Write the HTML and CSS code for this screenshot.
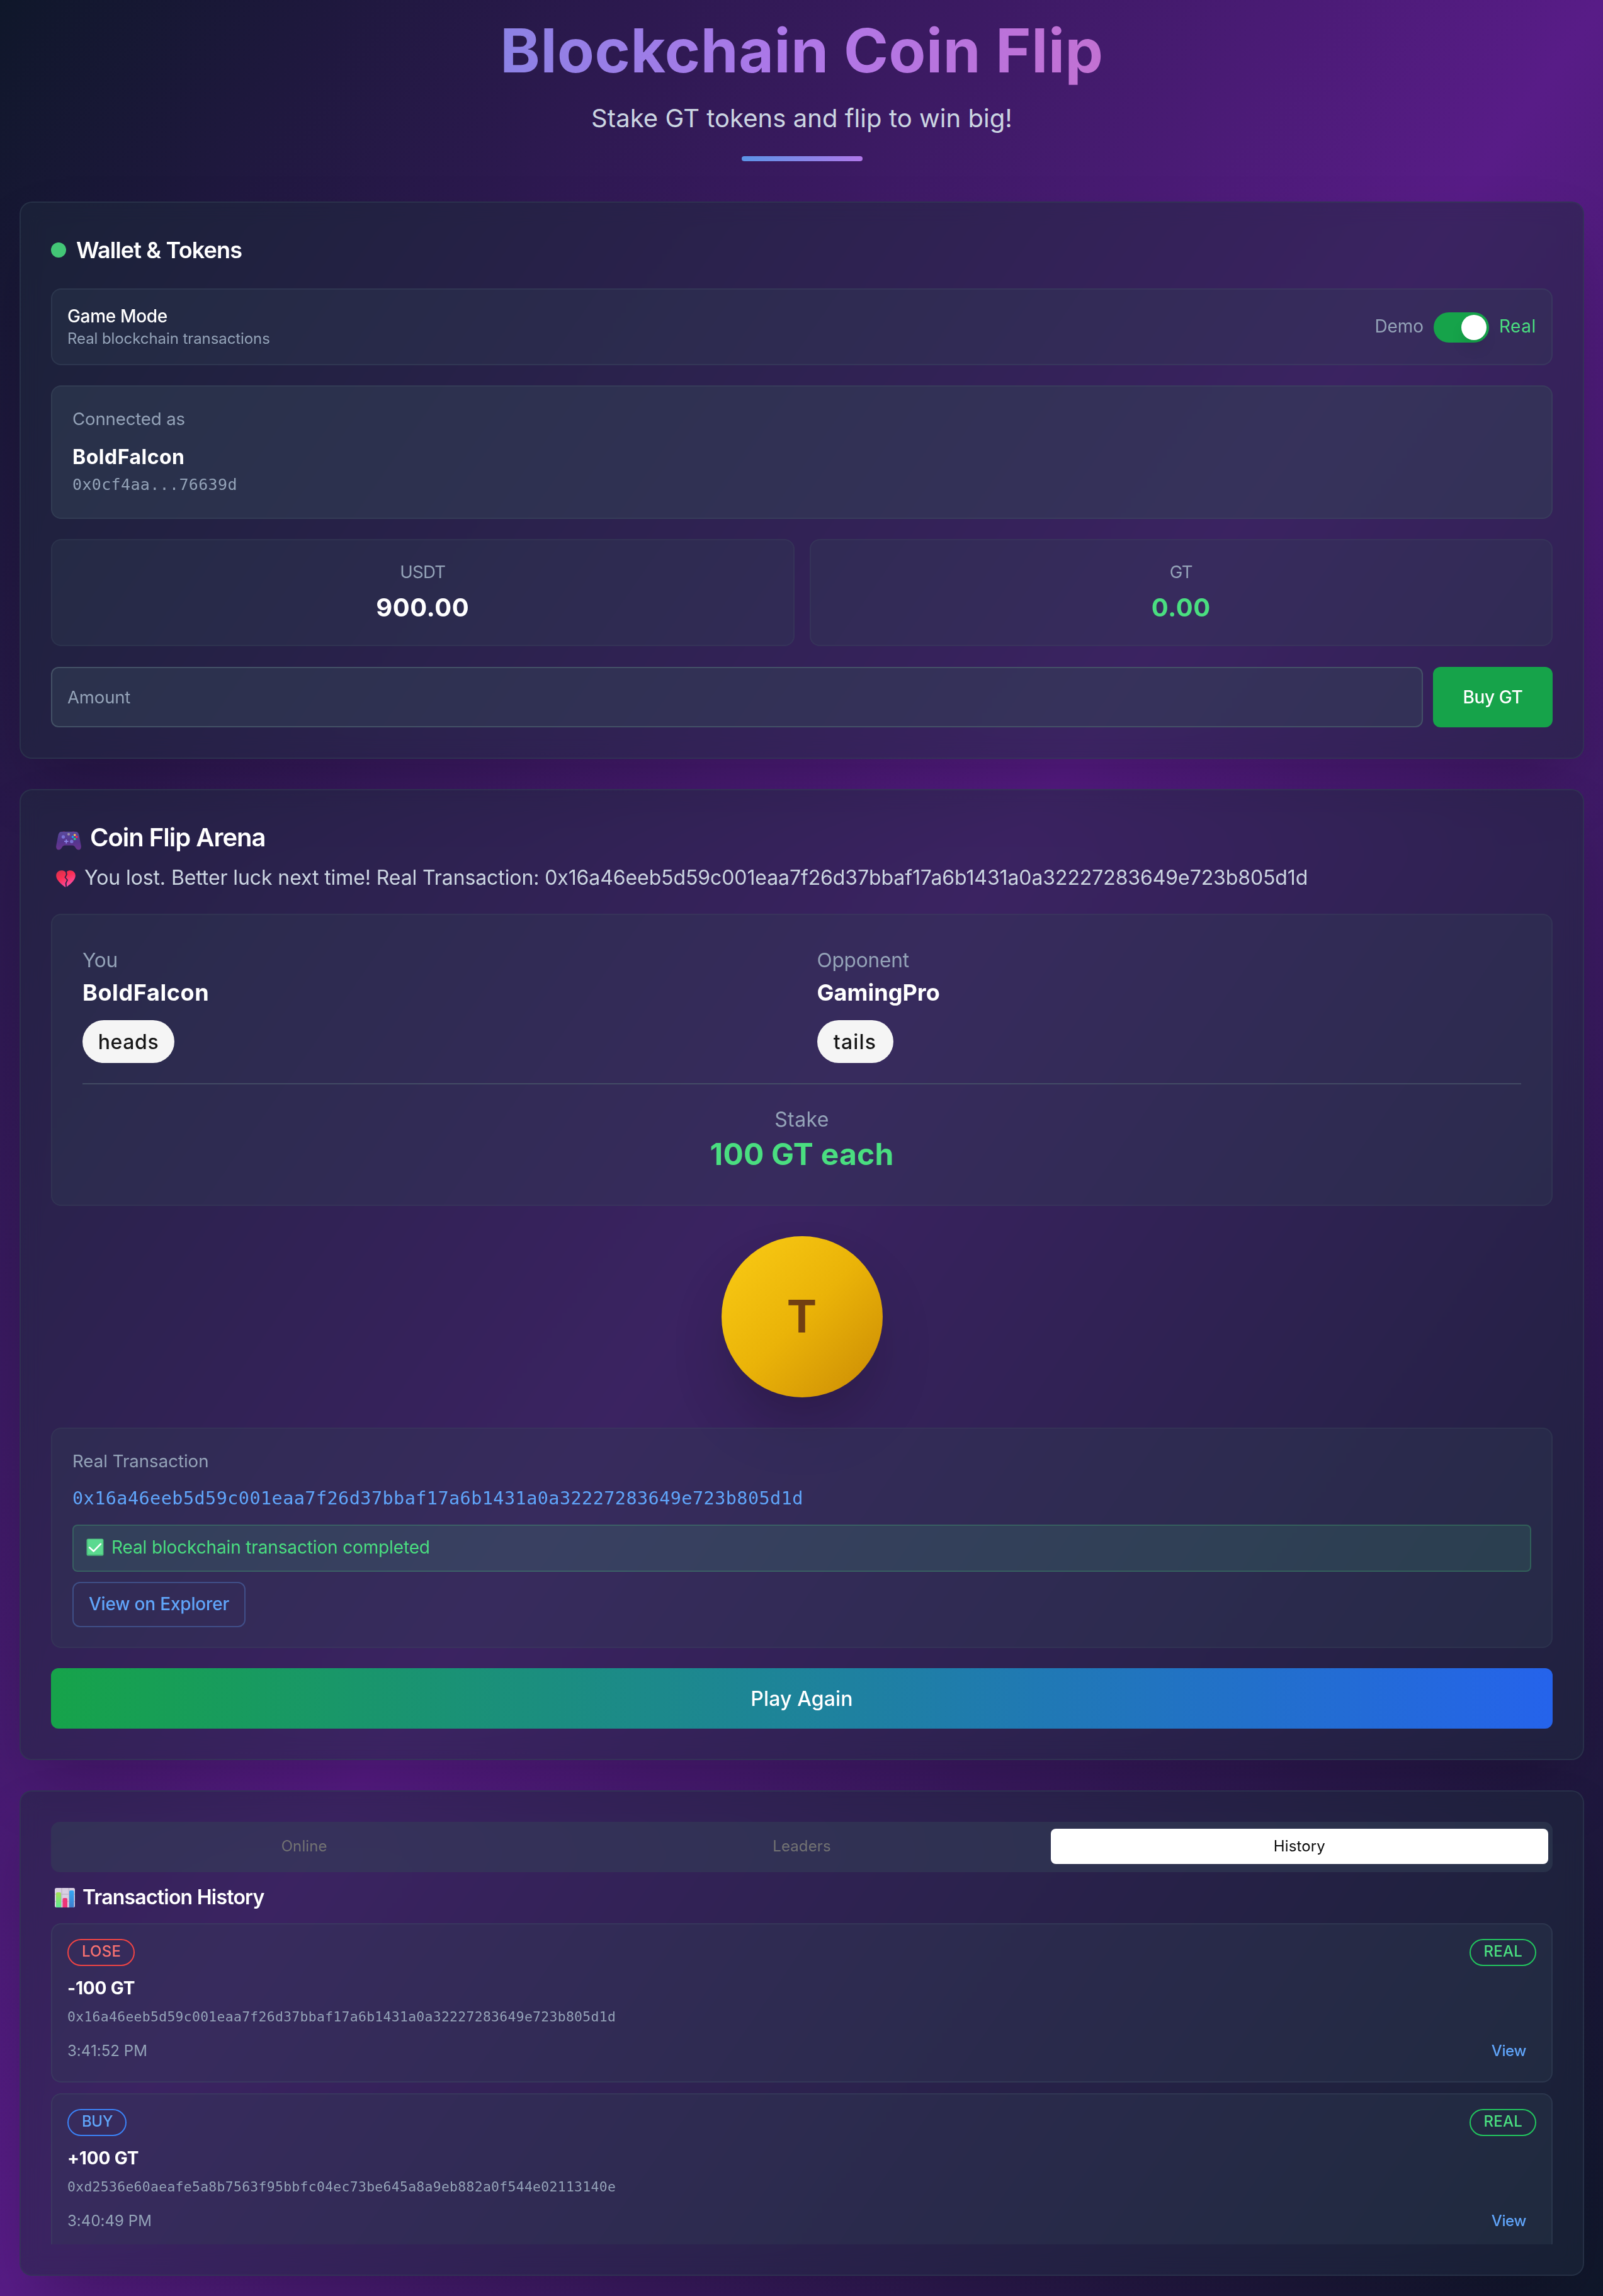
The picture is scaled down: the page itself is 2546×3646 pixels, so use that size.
FILE: index.html
```html
<!DOCTYPE html>
<html lang="en">
<head>
<meta charset="utf-8">
<title>Blockchain Coin Flip</title>
<link rel="stylesheet" href="styles.css">
</head>
<body>
<main class="page">
  <header class="hero">
    <h1 class="hero-title">Blockchain Coin Flip</h1>
    <p class="hero-sub">Stake GT tokens and flip to win big!</p>
    <div class="hero-bar"></div>
  </header>

  <section class="card wallet">
    <div class="card-head">
      <span class="dot"></span>
      <h2 class="wallet-title">Wallet &amp; Tokens</h2>
    </div>
    <div class="mode">
      <div class="mode-text">
        <div class="mode-name">Game Mode</div>
        <div class="mode-desc">Real blockchain transactions</div>
      </div>
      <div class="mode-switch">
        <span class="demo">Demo</span>
        <span class="switch"><span class="thumb"></span></span>
        <span class="real">Real</span>
      </div>
    </div>
    <div class="connected">
      <div class="label label-conn">Connected as</div>
      <div class="conn-name">BoldFalcon</div>
      <div class="conn-addr">0x0cf4aa...76639d</div>
    </div>
    <div class="balances">
      <div class="balance">
        <div class="label label-usdt">USDT</div>
        <div class="amount amount-usdt">900.00</div>
      </div>
      <div class="balance">
        <div class="label label-gt">GT</div>
        <div class="amount amount-gt">0.00</div>
      </div>
    </div>
    <div class="buy">
      <div class="input">Amount</div>
      <button class="buy-btn">Buy GT</button>
    </div>
  </section>

  <section class="card arena">
    <div class="arena-head">
      <svg class="pad" width="40" height="31" viewBox="0 0 40 31">
        <defs>
          <linearGradient id="padg" x1="0" y1="0" x2="0" y2="1"><stop offset="0" stop-color="#5a4a9c"/><stop offset=".55" stop-color="#55358e"/><stop offset="1" stop-color="#6b3590"/></linearGradient>
        </defs>
        <path d="M10 2.6C10.500 .4 14.500 .4 15 2.600ZM25 2.600C25.500 .4 29.500 .4 30 2.600Z" fill="#6e1747"/>
        <path d="M9 1.800H31C34 1.800 35.600 3.500 36.500 7L39.700 23.500C40.500 28 38.500 30.500 36 30.500C33.500 30.500 32 29 30.500 26.500C29 24.200 28 23.500 26 23.500H14C12 23.500 11 24.200 9.500 26.500C8 29 6.500 30.500 4 30.500C1.500 30.500-.5 28 .3 23.500L3.500 7C4.400 3.500 6 1.800 9 1.800Z" fill="url(#padg)"/>
        <circle cx="11.500" cy="10" r="2.700" fill="#7872d4"/>
        <circle cx="24.800" cy="17.200" r="2.700" fill="#7872d4"/>
        <path d="M16.300 14V20.500M13 17.200H19.600" stroke="#8c86ea" stroke-width="1.800"/>
        <circle cx="20" cy="5.700" r="2" fill="#9c92a6"/>
        <circle cx="29.700" cy="7" r="1.800" fill="#fdc751"/>
        <circle cx="32.800" cy="10" r="1.800" fill="#f9284e"/>
        <circle cx="26.500" cy="10" r="1.800" fill="#12a7f5"/>
        <circle cx="29.700" cy="13.200" r="1.800" fill="#22e080"/>
      </svg>
      <h2 class="arena-title">Coin Flip Arena</h2>
    </div>
    <div class="message">
      <svg class="heart" width="31" height="27" viewBox="0 0 31 27">
        <defs>
          <linearGradient id="hg" gradientUnits="userSpaceOnUse" x1="4" y1="0" x2="17" y2="27"><stop offset="0" stop-color="#d8304c"/><stop offset=".45" stop-color="#fb2f54"/><stop offset="1" stop-color="#fb4fa8"/></linearGradient>
        </defs>
        <path d="M15 2.400C13.200 .7 10.800 .2 8.500 .2C4 .2 .2 3.600 .2 8.300C.2 15 6 20.500 14.300 26.500L15.300 26.800L14.600 20.500L17 15.500L13.400 11.300L15.800 7Z" fill="url(#hg)"/>
        <path d="M17 2.200C18.600 .8 20.500 .2 22.500 .2C27 .2 30.800 3.600 30.800 8.300C30.800 15 25 20.500 17 26.200L16.600 20.500L19 15.200L15.400 11.200L17.800 7Z" fill="url(#hg)"/>
      </svg>
      <span>You lost. Better luck next time! Real Transaction: 0x16a46eeb5d59c001eaa7f26d37bbaf17a6b1431a0a32227283649e723b805d1d</span>
    </div>

    <div class="match">
      <div class="players">
        <div class="player">
          <div class="p-label">You</div>
          <div class="p-name">BoldFalcon</div>
          <span class="side side-heads">heads</span>
        </div>
        <div class="player">
          <div class="p-label">Opponent</div>
          <div class="p-name p-name-opp">GamingPro</div>
          <span class="side side-tails">tails</span>
        </div>
      </div>
      <div class="stake">
        <div class="p-label stake-label">Stake</div>
        <div class="stake-value">100 GT each</div>
      </div>
    </div>

    <div class="coin">T</div>

    <div class="tx">
      <div class="label label-tx">Real Transaction</div>
      <div class="tx-hash">0x16a46eeb5d59c001eaa7f26d37bbaf17a6b1431a0a32227283649e723b805d1d</div>
      <div class="tx-ok">
        <svg width="28" height="28" viewBox="0 0 28 28">
          <rect x=".5" y=".5" width="27" height="27" rx="2.500" fill="#4cc07c"/>
          <rect x="2.500" y="1.200" width="23.500" height="24" rx="1.500" fill="#5bd98f"/>
          <path d="M5.200 14.400L11.600 20.300L22.800 8.800" fill="none" stroke="#fff" stroke-width="2.600" stroke-linecap="round" stroke-linejoin="round"/>
        </svg>
        <span>Real blockchain transaction completed</span>
      </div>
      <button class="explorer">View on Explorer</button>
    </div>

    <button class="play">Play Again</button>
  </section>

  <section class="card log">
    <div class="tabs">
      <div class="tab">Online</div>
      <div class="tab">Leaders</div>
      <div class="tab tab-active">History</div>
    </div>
    <div class="log-head">
      <svg width="32" height="31" viewBox="0 0 32 31">
        <defs>
          <linearGradient id="b1" x1="0" y1="0" x2="0" y2="1"><stop offset="0" stop-color="#a6e052"/><stop offset="1" stop-color="#5be894"/></linearGradient>
          <linearGradient id="b3" x1="0" y1="0" x2="0" y2="1"><stop offset="0" stop-color="#33a8f5"/><stop offset="1" stop-color="#3f7dcb"/></linearGradient>
        </defs>
        <rect width="32" height="31" rx="2.500" fill="#d9d0e2"/>
        <path d="M11 0V31M22.500 0V31M0 10H32M0 21.500H32" stroke="#bfb5ca" stroke-width="1.400"/>
        <path d="M2 9Q2 7 4 7H8Q10 7 10 9V31H3Q2 31 2 30Z" fill="url(#b1)"/>
        <path d="M12.500 18Q12.500 16 14.500 16H18Q20 16 20 18V31H12.500Z" fill="#ee3478"/>
        <path d="M23 6Q23 4 25 4H28.500Q30.500 4 30.500 6V29.500Q30.500 31 29 31H23Z" fill="url(#b3)"/>
      </svg>
      <h3 class="log-title">Transaction History</h3>
    </div>
    <div class="rows">
      <article class="row">
        <div class="row-line">
          <span class="badge badge-lose">LOSE</span>
          <span class="badge badge-real">REAL</span>
        </div>
        <div class="row-amount">-100 GT</div>
        <div class="row-hash">0x16a46eeb5d59c001eaa7f26d37bbaf17a6b1431a0a32227283649e723b805d1d</div>
        <div class="row-line row-foot">
          <span class="time">3:41:52 PM</span>
          <a class="view">View</a>
        </div>
      </article>
      <article class="row">
        <div class="row-line">
          <span class="badge badge-buy">BUY</span>
          <span class="badge badge-real">REAL</span>
        </div>
        <div class="row-amount">+100 GT</div>
        <div class="row-hash">0xd2536e60aeafe5a8b7563f95bbfc04ec73be645a8a9eb882a0f544e02113140e</div>
        <div class="row-line row-foot">
          <span class="time">3:40:49 PM</span>
          <a class="view">View</a>
        </div>
      </article>
    </div>
  </section>
</main>
</body>
</html>
```
FILE: styles.css
```css
*, *::before, *::after { box-sizing: border-box; margin: 0; padding: 0; }

body {
  font-family: Inter, "Liberation Sans", sans-serif;
  color: #fff;
  background: #0f172a;
  white-space: nowrap;
}

button { font: inherit; border: 0; background: none; color: inherit; }

.page {
  height: 3646px;
  padding: 32px 30px 32px 31px;
  background: linear-gradient(to bottom right, #0f172a, #581c87, #0f172a);
  overflow: hidden;
}

/* Header */
.hero { display: flex; flex-direction: column; align-items: center; margin-bottom: 64px; }
.hero-title {
  width: 100%;
  text-align: center;
  font-size: 96px;
  line-height: 96px;
  font-weight: 700;
  letter-spacing: .61px;
  background: linear-gradient(to right, #60a5fa, #c084fc, #f472b6);
  background-clip: text;
  -webkit-background-clip: text;
  color: transparent;
  opacity: .88;
  padding-bottom: 10px;
  margin-bottom: -10px;
}
.hero-sub { margin-top: 32px; font-size: 40px; line-height: 56px; letter-spacing: .05px; color: #cbd5e1; }
.hero-bar { margin-top: 32px; width: 192px; height: 8px; border-radius: 4px; background: linear-gradient(to right, #60a5fa, #c084fc); opacity: .88; }

/* Cards */
.card {
  padding: 48px;
  border: 2px solid rgba(51, 65, 85, .5);
  border-radius: 20px;
  background: rgba(30, 41, 59, .5);
  box-shadow: 0 50px 100px -24px rgba(0, 0, 0, .25);
  backdrop-filter: blur(16px);
}
.card + .card { margin-top: 48px; }

.label { font-size: 27.6px; line-height: 40px; letter-spacing: -.15px; color: #94a3b8; }

/* Wallet */
.card-head { display: flex; align-items: center; gap: 16px; height: 54px; }
.dot { width: 24px; height: 24px; border-radius: 50%; background: #4ade80; opacity: .88; }
.wallet-title { font-size: 36px; line-height: 54px; font-weight: 600; letter-spacing: -.85px; }

.mode {
  display: flex; align-items: center; justify-content: space-between;
  margin-top: 34px; height: 122px; padding: 22px 24px 24px;
  border: 2px solid rgba(71, 85, 105, .3); border-radius: 16px;
  background: rgba(51, 65, 85, .3);
}
.mode-name { font-size: 28px; line-height: 40px; font-weight: 500; letter-spacing: -.33px; }
.mode-desc { font-size: 24px; line-height: 32px; letter-spacing: -.08px; color: #94a3b8; }
.mode-switch { display: flex; align-items: center; gap: 16px; font-size: 28px; line-height: 40px; }
.demo { color: #94a3b8; letter-spacing: -.13px; }
.real { color: #4ade80; letter-spacing: .6px; }
.switch { display: flex; align-items: center; justify-content: flex-end; width: 88px; height: 48px; margin-top: 4px; padding: 4px; border-radius: 24px; background: #16a34a; }
.thumb { width: 40px; height: 40px; border-radius: 50%; background: #fff; box-shadow: 0 16px 24px -6px rgba(0, 0, 0, .15); }

.connected {
  margin-top: 32px; height: 212px; padding: 31px 32px;
  border: 2px solid rgba(71, 85, 105, .3); border-radius: 16px;
  background: rgba(51, 65, 85, .5);
}
.conn-name { margin-top: 17px; font-size: 32px; line-height: 48px; font-weight: 700; letter-spacing: .5px; }
.conn-addr { margin-top: 4px; font-family: "DejaVu Sans Mono", monospace; font-size: 25px; line-height: 32px; letter-spacing: .35px; color: #94a3b8; }

.balances { display: grid; grid-template-columns: 1fr 1fr; gap: 24px; margin-top: 32px; }
.balance {
  height: 170px; padding-top: 30px; text-align: center;
  border: 2px solid rgba(71, 85, 105, .2); border-radius: 16px;
  background: rgba(51, 65, 85, .3);
}
.label-usdt, .label-gt { letter-spacing: -.8px; }
.amount { margin-top: 9px; font-size: 40px; line-height: 56px; font-weight: 700; letter-spacing: .5px; }
.amount-gt { color: #4ade80; }

.buy { display: flex; gap: 16px; margin-top: 33px; height: 96px; }
.input {
  flex: 1; padding-left: 24px; font-size: 27.6px; line-height: 93px; letter-spacing: -.2px; color: #94a3b8;
  border: 2px solid rgba(71, 85, 105, .9); border-radius: 12px;
  background: rgba(51, 65, 85, .5);
}
.buy-btn { width: 190px; border-radius: 12px; background: #16a34a; font-size: 28px; font-weight: 500; letter-spacing: -.35px; }

/* Arena */
.arena-head { display: flex; align-items: center; height: 54px; padding-left: 8px; gap: 14px; }
.pad { margin-top: 9px; }
.arena-title { font-size: 40px; line-height: 54px; font-weight: 600; letter-spacing: -1px; }
.message { display: flex; align-items: center; gap: 14px; margin-top: 13px; height: 48px; padding-left: 8px; font-size: 32px; line-height: 48px; letter-spacing: -.1px; color: #cbd5e1; }
.heart { margin-top: 2px; }

.match {
  margin-top: 33px; height: 464px; padding: 48px;
  border: 2px solid rgba(71, 85, 105, .2); border-radius: 16px;
  background: rgba(51, 65, 85, .3);
}
.players { display: grid; grid-template-columns: 1fr 1fr; gap: 48px; }
.player { display: flex; flex-direction: column; align-items: flex-start; }
.p-label { font-size: 31.6px; line-height: 48px; letter-spacing: -.2px; color: #94a3b8; }
.p-name { font-size: 36px; line-height: 54px; font-weight: 700; letter-spacing: .6px; }
.p-name-opp { letter-spacing: .05px; }
.side { display: flex; align-items: center; justify-content: center; height: 68px; margin-top: 17px; border-radius: 34px; background: #f5f5f5; color: #171717; font-size: 32px; font-weight: 500; }
.side-heads { width: 146px; letter-spacing: .6px; }
.side-tails { width: 121px; letter-spacing: 1.2px; }
.stake { margin-top: 32px; padding-top: 32px; border-top: 2px solid rgba(71, 85, 105, .8); text-align: center; }
.stake-label { font-size: 32px; letter-spacing: .4px; }
.stake-value { font-size: 48px; line-height: 62px; font-weight: 700; letter-spacing: .2px; color: #4ade80; }

.coin {
  display: flex; align-items: center; justify-content: center;
  width: 256px; height: 256px; margin: 48px auto; padding-bottom: 3px; border-radius: 50%;
  background: linear-gradient(to bottom right, #facc15, #eab308, #ca8a04);
  box-shadow: 0 50px 100px -24px rgba(0, 0, 0, .25);
  color: #713f12; font-size: 71px; font-weight: 700;
}

.tx {
  height: 350px; padding: 31px 32px;
  border: 2px solid rgba(71, 85, 105, .2); border-radius: 16px;
  background: rgba(51, 65, 85, .3);
}
.label-tx { letter-spacing: 0; }
.tx-hash { margin-top: 20px; font-family: "DejaVu Sans Mono", monospace; font-size: 28.5px; line-height: 40px; letter-spacing: .43px; color: #60a5fa; }
.tx-ok {
  display: flex; align-items: center; gap: 12px; margin-top: 21px; height: 75px; padding: 0 20px 3px;
  border: 2px solid rgba(74, 222, 128, .2); border-radius: 8px; background: rgba(74, 222, 128, .12);
  color: #4ade80; font-size: 28px; letter-spacing: -.14px;
}
.explorer { display: block; margin-top: 16px; width: 275px; height: 72px; padding-bottom: 2px; border: 2px solid rgba(96, 165, 250, .3); border-radius: 12px; color: #60a5fa; font-size: 28px; font-weight: 500; letter-spacing: -.18px; }
.play { display: block; width: 100%; height: 96px; margin-top: 32px; border-radius: 12px; background: linear-gradient(to right, #16a34a, #2563eb); font-size: 32px; font-weight: 500; letter-spacing: .15px; }

/* History */
.tabs { display: grid; grid-template-columns: repeat(3, 1fr); height: 80px; padding: 11px 7px 13px; border-radius: 14px; background: rgba(51, 65, 85, .5); }
.tab { text-align: center; font-size: 24px; line-height: 56px; letter-spacing: .12px; color: #737373; border-radius: 8px; }
.tab-active { background: #fff; color: #0a0a0a; }
.log-head { display: flex; align-items: center; gap: 12px; margin-top: 16px; height: 48px; padding-left: 6px; }
.log-title { font-size: 32px; line-height: 48px; font-weight: 600; letter-spacing: -.78px; }
.rows { margin-top: 17px; height: 510px; overflow: hidden; }
.row {
  height: 253px; padding: 23px 24px 0;
  border: 2px solid rgba(71, 85, 105, .3); border-radius: 16px;
  background: rgba(51, 65, 85, .3);
}
.row + .row { margin-top: 17px; }
.row-line { display: flex; align-items: center; justify-content: space-between; }
.badge { display: flex; align-items: center; height: 43px; padding: 0 20px 5px 21px; border: 2px solid; border-radius: 22px; font-size: 24px; font-weight: 500; letter-spacing: .2px; }
.badge-lose { border-color: #ef4444; color: #f87171; }
.badge-buy { border-color: #3b82f6; color: #60a5fa; letter-spacing: -.4px; }
.badge-real { border-color: #22c55e; color: #4ade80; }
.row-amount { margin-top: 15px; font-size: 28px; line-height: 41px; font-weight: 700; letter-spacing: -.15px; }
.row-hash { margin-top: 9px; font-family: "DejaVu Sans Mono", monospace; font-size: 21.4px; line-height: 32px; letter-spacing: .32px; color: #94a3b8; }
.row-foot { margin-top: 22px; }
.time { font-size: 24px; line-height: 32px; letter-spacing: .05px; color: #94a3b8; }
.view { padding-right: 16px; font-size: 24px; line-height: 32px; font-weight: 500; letter-spacing: -.35px; color: #60a5fa; }
```
